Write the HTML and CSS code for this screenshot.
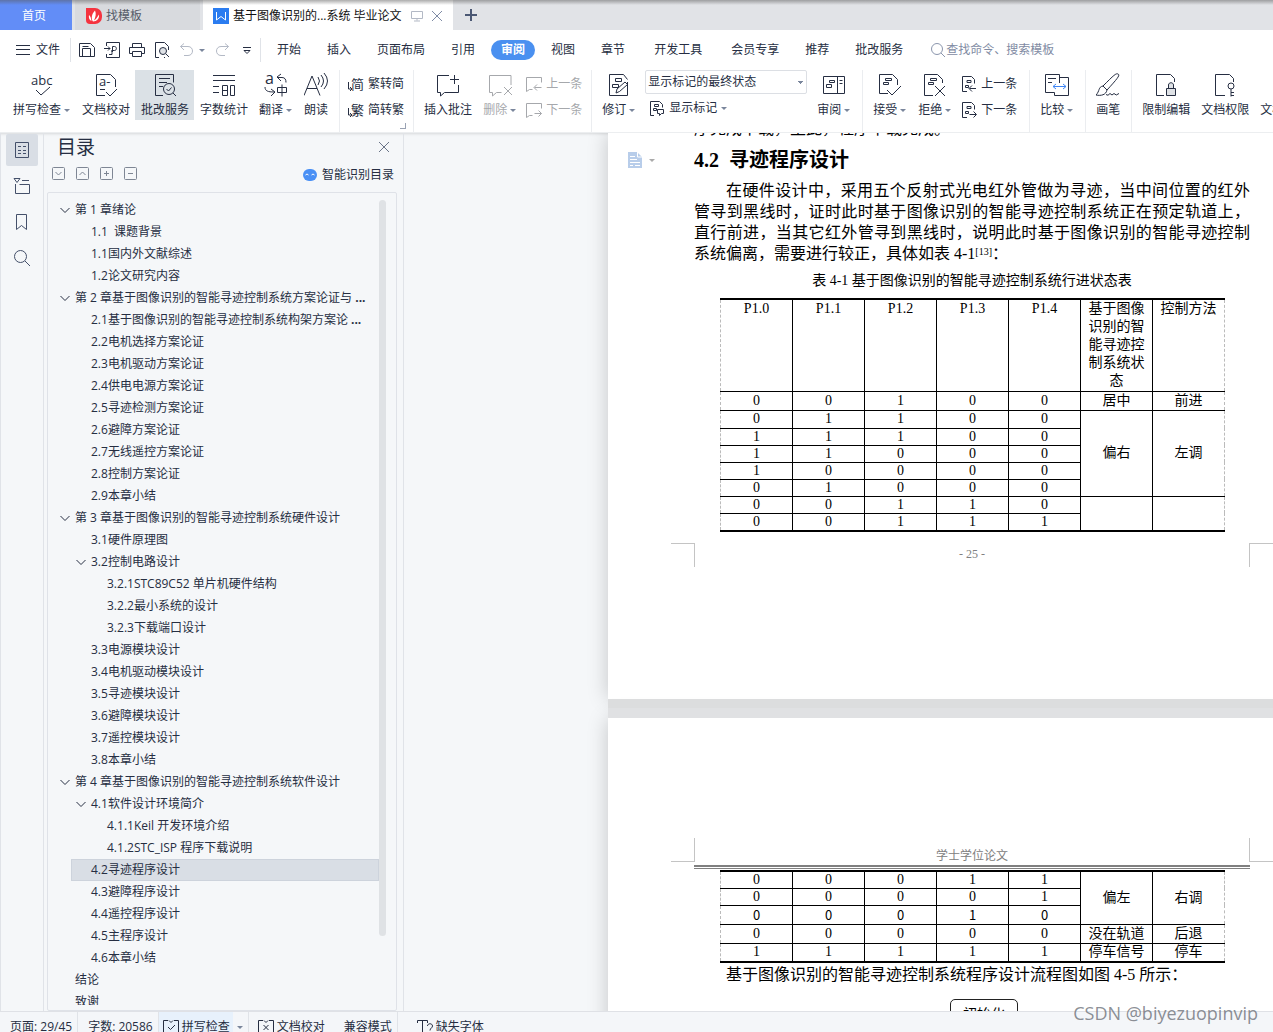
FILE: index.html
```html
<!DOCTYPE html>
<html lang="zh-CN">
<head>
<meta charset="utf-8">
<title>基于图像识别的...系统 毕业论文</title>
<link rel="stylesheet" href="styles.css">
</head>
<body>
<svg class="defs" aria-hidden="true">
  <symbol id="note-prev" viewBox="0 0 16 16"><path d="M.5 15.500v-14h15v5M.5 15.500l3-2h3M15.500 11.500H8.500M11 8.500l-3 3 3 3"/></symbol>
  <symbol id="note-next" viewBox="0 0 16 16"><path d="M.5 15.500v-14h15v5M.5 15.500l3-2h3M8.500 11.500h7M12.500 8.500l3 3-3 3"/></symbol>
  <symbol id="rev-prev" viewBox="0 0 16 16"><path d="M6 15.500H1.500V.5h9l3 3v4M6 4.500h4v2H6zM4.500 9.500h3v2h-3zM15 12.500H8.500M11 9.500l-3 3 3 3"/></symbol>
  <symbol id="rev-next" viewBox="0 0 16 16"><path d="M6 15.500H1.500V.5h9l3 3v4M6 4.500h4v2H6zM4.500 9.500h3v2h-3zM8.500 12.500H15M12.500 9.500l3 3-3 3"/></symbol>
  <symbol id="chev" viewBox="0 0 10 10"><path d="M.5 3L5 7.500 9.500 3"/></symbol>
</svg>

<header class="tabs">
  <a class="tab home" href="#">首页</a>
  <a class="tab template" href="#"><svg width="16" height="16" viewBox="0 0 16 16"><path class="red" d="M0 0h9a7 7 0 0 1 7 7v2a7 7 0 0 1-7 7H4a4 4 0 0 1-4-4z"/><path class="white" d="M7 13.500C5 11 5.500 6 9 2.500c1.500 3 .5 7-1 10 2-1 3-3 5-6 .5 4-2 7-6 7zM5.500 13C3 12 2.500 9.500 3 7c1.500 1 2 3 2.500 6z"/></svg>找模板</a>
  <div class="tab current"><svg width="16" height="16" viewBox="0 0 16 16"><path class="blue" d="M0 0h16v16H0z"/><path class="wline" d="M3.500 4v8L8 8.500l4.500 3.500V4"/></svg><span>基于图像识别的...系统 毕业论文</span>
    <svg class="pale" width="12" height="12" viewBox="0 0 12 12"><path d="M.5 1.500h11v7H.5zM6 8.500v2M3 11h6"/></svg>
    <button class="plain" aria-label="关闭标签"><svg class="mid" width="12" height="12" viewBox="0 0 12 12"><path d="M1 1l10 10M11 1L1 11"/></svg></button></div>
  <button class="plain add" aria-label="新建"><svg width="12" height="12" viewBox="0 0 12 12"><path d="M6 0v12M0 6h12"/></svg></button>
</header>

<nav class="menu">
  <button class="plain file"><svg width="14" height="12" viewBox="0 0 14 12"><path d="M0 1.500h14M0 5.500h14M0 10.500h14"/></svg>文件</button>
  <div class="quick">
    <button class="plain" aria-label="保存"><svg viewBox="0 0 16 16"><path d="M.5 1.500h11l4 4v9H.5zM3.500 14.500v-8h8v8M3.500 4.500h6"/></svg></button>
    <button class="plain" aria-label="输出PDF"><svg viewBox="0 0 16 16"><path d="M2.500 4V.5h13v15h-13V12M0 6.500h6M4 4.500l2 2-2 2M5 12.500h3v-2c-1-2 0-3 1-2M8.500 10V4.500h2c2.500 0 2.500 4 0 4H8.500"/></svg></button>
    <button class="plain" aria-label="打印"><svg viewBox="0 0 16 16"><path d="M3.500 5.500v-4h9v4M3.500 11.500h-3v-6h15v6h-3M3.500 9.500h9v5h-9z"/></svg></button>
    <button class="plain" aria-label="打印预览"><svg viewBox="0 0 16 16"><path d="M5 15.500H1.500V.5h9l4 4V8M10 15.500h1"/><circle class="fill" cx="9" cy="9" r="3.500"/><path d="M12 12l3 3"/></svg></button>
    <button class="plain undo" aria-label="撤销"><svg class="pale" viewBox="0 0 16 16"><path d="M5 1.500l-3.500 3L5 8M1.500 4.500H9c6 0 6 9 0 9H5"/></svg><i class="caret"></i></button>
    <button class="plain" aria-label="恢复"><svg class="pale" viewBox="0 0 16 16"><path d="M11 1.500l3.500 3L11 8M14.500 4.500H7c-6 0-6 9 0 9h4"/></svg></button>
    <button class="plain" aria-label="更多"><svg viewBox="0 0 16 16"><path d="M4 5.500h8M5 8.500l3 3 3-3z"/></svg></button>
  </div>
  <div class="menus">
    <a href="#">开始</a><a href="#">插入</a><a href="#">页面布局</a><a href="#">引用</a><a class="on" href="#">审阅</a><a href="#">视图</a><a href="#">章节</a><a class="wide" href="#">开发工具</a><a href="#">会员专享</a><a href="#">推荐</a><a href="#">批改服务</a>
  </div>
  <label class="search"><svg width="16" height="16" viewBox="0 0 16 16"><circle cx="7" cy="7" r="5.500"/><path d="M11 11l4 4"/></svg><input type="text" aria-label="查找命令" placeholder="查找命令、搜索模板"></label>
</nav>

<section class="ribbon">
  <button class="big"><svg viewBox="0 0 24 24"><text x="1" y="12" class="glyph">abc</text><path d="M6 17l5 5 9-8"/></svg><span>拼写检查<i class="caret"></i></span></button>
  <button class="big"><svg viewBox="0 0 24 24"><path d="M11 22.500H2.500v-21h14l5 5V14M12 19l4 4 7-7M6 16.500h5"/><text x="5" y="13" class="glyph">a-</text></svg><span>文档校对</span></button>
  <button class="big active"><svg viewBox="0 0 24 24"><path d="M10 22.500H2.500v-21h18v8M6 5.500h11M6 9.500h8M6 13.500h4"/><circle cx="16" cy="16" r="5.500"/><path d="M20 20l3 3M13.500 16l2 2 3-3.500"/></svg><span>批改服务</span></button>
  <button class="big"><svg viewBox="0 0 24 24"><path d="M1 2.500h22M1 7.500h22M1 13.500h6M1 19.500h6M10.500 12.500h5v10h-5zM10.500 17.500h5M18.500 12.500h4v10h-4z"/></svg><span>字数统计</span></button>
  <button class="big"><svg viewBox="0 0 24 24"><text x="1" y="11" class="letter">a</text><path d="M17 1l-4 3 4 4M13 4.500h5c3 0 4 2 4 5M1 14c0 4 3 5 9 5M7 16l4 3-4 4M13.500 14.500h9v5h-9zM18 11.500v12"/></svg><span>翻译<i class="caret"></i></span></button>
  <button class="big"><svg viewBox="0 0 24 24"><path d="M0 22.500L8 3l8 19.500M3 15.500h10M14 4q3 4 0 8M17 2q5 6 0 12M20 0q7 8 0 16"/></svg><span>朗读</span></button>
  <hr>
  <div class="pair corner">
    <button><svg viewBox="0 0 16 16"><text x="3" y="13" class="glyph">简</text><path d="M.5 6v7h3M2 11l2 2-2 2"/></svg>繁转简</button>
    <button><svg viewBox="0 0 16 16"><text x="3" y="13" class="glyph">繁</text><path d="M.5 6v7h3M2 11l2 2-2 2"/></svg>简转繁</button>
  </div>
  <hr>
  <button class="big"><svg viewBox="0 0 24 24"><path d="M13 2.500H1.500v17h3V23l4-3.500h14V12M14 6.500h9M18.500 2v9"/></svg><span>插入批注</span></button>
  <button class="big off"><svg viewBox="0 0 24 24"><path d="M23 12V2.500H1.500v17h3V23l4-3.500h5M16 14l8 8M24 14l-8 8"/></svg><span>删除<i class="caret"></i></span></button>
  <div class="pair off">
    <button><svg><use href="#note-prev"/></svg>上一条</button>
    <button><svg><use href="#note-next"/></svg>下一条</button>
  </div>
  <hr>
  <button class="big"><svg viewBox="0 0 24 24"><path d="M20.500 9v13.500h-18v-21h14l4 5M8.500 5.500h6v3h-6zM5.500 11.500h6v3h-6zM9 20l1-4 8-7 2.500 2.500-8 7z"/></svg><span>修订<i class="caret"></i></span></button>
  <div class="pair state">
    <select aria-label="显示状态"><option>显示标记的最终状态</option></select>
    <button><svg viewBox="0 0 16 16"><path d="M5 15.500H1.500v-14h9l3 3v3M5.500 4.500h4v2h-4zM4.500 8.500h3v2h-3zM8.500 9.500h6v4h-2l-2 2v-2h-2z"/></svg>显示标记<i class="caret"></i></button>
  </div>
  <button class="big"><svg viewBox="0 0 24 24"><path d="M1.500 3.500h21v17h-21zM15.500 3.500v17M17.500 7.500h3M17.500 10.500h3M7.500 7.500h5v2h-5zM4.500 11.500h5v3h-5z"/></svg><span>审阅<i class="caret"></i></span></button>
  <hr>
  <button class="big"><svg viewBox="0 0 24 24"><path d="M10 20.500H1.500v-19h13l5 5V12M7.500 5.500h6v2h-6zM5.500 9.500h5v2h-5zM9 17l5 5 9-9"/></svg><span>接受<i class="caret"></i></span></button>
  <button class="big"><svg viewBox="0 0 24 24"><path d="M10 22.500H1.500v-21h13l5 5V10M7.500 5.500h6v2h-6zM5.500 9.500h5v2h-5zM12 13l10 10M22 13L12 23"/></svg><span>拒绝<i class="caret"></i></span></button>
  <div class="pair review">
    <button><svg><use href="#rev-prev"/></svg>上一条</button>
    <button><svg><use href="#rev-next"/></svg>下一条</button>
  </div>
  <hr>
  <button class="big"><svg viewBox="0 0 24 24"><path d="M14.500 10V1.500H.5v18h9M9.500 19.500v3h14v-18h-9M3 5.500h8M3 9.500h4"/><path class="bluel" d="M8 13.500h13M11 11l-3 2.500 3 2.500M18 11l3 2.500-3 2.500"/></svg><span>比较<i class="caret"></i></span></button>
  <hr>
  <button class="big"><svg viewBox="0 0 24 24"><path d="M22 1c2 1 1 3-11 16l-4-4C18 2 20 0 22 1zM7 13c-5 1-3 5-7 9 5 1 10 0 11-5M10 21.500q2 2 4-1 2 3 4 0 2 3 5 0"/></svg><span>画笔</span></button>
  <hr>
  <button class="big"><svg viewBox="0 0 24 24"><path d="M10 22.500H2.500v-21h14l4 4V9"/><path class="fill" d="M12.500 15.500h9v7h-9zM14.500 15v-3c0-3 5-3 5 0v3"/></svg><span>限制编辑</span></button>
  <button class="big"><svg viewBox="0 0 24 24"><path d="M12 22.500H2.500v-21h14l4 4V9M18 16v7.500M18 19.500h3M18 22.500h3"/><circle cx="18" cy="13" r="3"/></svg><span>文档权限</span></button>
  <button class="big"><svg viewBox="0 0 24 24"></svg><span>文档认证</span></button>
</section>

<main>
  <nav class="rail">
    <button class="active" aria-label="目录"><svg viewBox="0 0 20 20"><path d="M3.500 2.500h13v15h-13zM6 6.500h3M11 6.500h3M6 10.500h3M11 10.500h3M6 13.500h3M11 13.500h3"/></svg></button>
    <button aria-label="章节"><svg viewBox="0 0 20 20"><path d="M2 2.500h6l-3 4zM10 4.500h7M3.500 8v9.500h14v-9h-10"/></svg></button>
    <button aria-label="书签"><svg viewBox="0 0 20 20"><path d="M4.500 2.500h10v15l-5-4-5 4z"/></svg></button>
    <button aria-label="查找"><svg viewBox="0 0 20 20"><circle cx="8.500" cy="8.500" r="6"/><path d="M13 13l5 5"/></svg></button>
  </nav>
  <aside class="outline">
    <div class="head"><h2>目录</h2><button class="plain" aria-label="关闭"><svg width="10" height="10" viewBox="0 0 10 10"><path d="M0 0l10 10M10 0L0 10"/></svg></button></div>
    <div class="tools">
      <button class="plain" aria-label="展开"><svg viewBox="0 0 13 13"><rect x=".5" y=".5" width="12" height="12" rx="1"/><path d="M3.500 5l3 3 3-3"/></svg></button>
      <button class="plain" aria-label="收起"><svg viewBox="0 0 13 13"><rect x=".5" y=".5" width="12" height="12" rx="1"/><path d="M3.500 8l3-3 3 3"/></svg></button>
      <button class="plain" aria-label="升级"><svg viewBox="0 0 13 13"><rect x=".5" y=".5" width="12" height="12" rx="1"/><path d="M4 6.500h5M6.500 4v5"/></svg></button>
      <button class="plain" aria-label="降级"><svg viewBox="0 0 13 13"><rect x=".5" y=".5" width="12" height="12" rx="1"/><path d="M4 6.500h5"/></svg></button>
      <a class="smart" href="#"><svg width="14" height="12" viewBox="0 0 14 12"><rect class="dot" width="14" height="12" rx="6"/><path class="wline" d="M2.500 6q1.500-2 3 0M8.500 6q1.500-2 3 0"/></svg>智能识别目录</a>
    </div>
    <div class="tree">
      <ul>
        <li><a href="#"><svg><use href="#chev"/></svg>第 1 章绪论</a></li>
        <li class="l2"><a href="#">1.1&nbsp; 课题背景</a></li>
        <li class="l2"><a href="#">1.1国内外文献综述</a></li>
        <li class="l2"><a href="#">1.2论文研究内容</a></li>
        <li><a href="#"><svg><use href="#chev"/></svg>第 2 章基于图像识别的智能寻迹控制系统方案论证与 <b>...</b></a></li>
        <li class="l2"><a href="#">2.1基于图像识别的智能寻迹控制系统构架方案论 <b>...</b></a></li>
        <li class="l2"><a href="#">2.2电机选择方案论证</a></li>
        <li class="l2"><a href="#">2.3电机驱动方案论证</a></li>
        <li class="l2"><a href="#">2.4供电电源方案论证</a></li>
        <li class="l2"><a href="#">2.5寻迹检测方案论证</a></li>
        <li class="l2"><a href="#">2.6避障方案论证</a></li>
        <li class="l2"><a href="#">2.7无线遥控方案论证</a></li>
        <li class="l2"><a href="#">2.8控制方案论证</a></li>
        <li class="l2"><a href="#">2.9本章小结</a></li>
        <li><a href="#"><svg><use href="#chev"/></svg>第 3 章基于图像识别的智能寻迹控制系统硬件设计</a></li>
        <li class="l2"><a href="#">3.1硬件原理图</a></li>
        <li class="l2"><a href="#"><svg><use href="#chev"/></svg>3.2控制电路设计</a></li>
        <li class="l3"><a href="#">3.2.1STC89C52 单片机硬件结构</a></li>
        <li class="l3"><a href="#">3.2.2最小系统的设计</a></li>
        <li class="l3"><a href="#">3.2.3下载端口设计</a></li>
        <li class="l2"><a href="#">3.3电源模块设计</a></li>
        <li class="l2"><a href="#">3.4电机驱动模块设计</a></li>
        <li class="l2"><a href="#">3.5寻迹模块设计</a></li>
        <li class="l2"><a href="#">3.6避障模块设计</a></li>
        <li class="l2"><a href="#">3.7遥控模块设计</a></li>
        <li class="l2"><a href="#">3.8本章小结</a></li>
        <li><a href="#"><svg><use href="#chev"/></svg>第 4 章基于图像识别的智能寻迹控制系统软件设计</a></li>
        <li class="l2"><a href="#"><svg><use href="#chev"/></svg>4.1软件设计环境简介</a></li>
        <li class="l3"><a href="#">4.1.1Keil 开发环境介绍</a></li>
        <li class="l3"><a href="#">4.1.2STC_ISP 程序下载说明</a></li>
        <li class="l2 sel"><a href="#">4.2寻迹程序设计</a></li>
        <li class="l2"><a href="#">4.3避障程序设计</a></li>
        <li class="l2"><a href="#">4.4遥控程序设计</a></li>
        <li class="l2"><a href="#">4.5主程序设计</a></li>
        <li class="l2"><a href="#">4.6本章小结</a></li>
        <li><a href="#">结论</a></li>
        <li><a href="#">致谢</a></li>
      </ul>
      <div class="scroll"></div>
    </div>
  </aside>

  <div class="canvas">
    <article class="page">
      <div class="cut"><p>序完成下载，至此，程序下载完成。</p></div>
      <div class="title">
        <button class="plain mark" aria-label="段落布局"><svg width="14" height="16" viewBox="0 0 14 16"><path class="pblue" d="M0 0h9l5 5v11H0z"/><path class="wline" d="M2 4.500h5M2 7.500h7M2 10.500h10M2 13.500h3M7 13.500h5M9.500 0v5h5"/></svg><i class="caret"></i></button>
        <h1>4.2  寻迹程序设计</h1>
      </div>
      <p class="body">在硬件设计中，采用五个反射式光电红外管做为寻迹，当中间位置的红外管寻到黑线时，证时此时基于图像识别的智能寻迹控制系统正在预定轨道上，直行前进，当其它红外管寻到黑线时，说明此时基于图像识别的智能寻迹控制系统偏离，需要进行较正，具体如表 4-1<sup>[13]</sup>：</p>
      <p class="caption" id="cap">表 4-1 基于图像识别的智能寻迹控制系统行进状态表</p>
      <table aria-labelledby="cap">
        <thead><tr><th>P1.0</th><th>P1.1</th><th>P1.2</th><th>P1.3</th><th>P1.4</th><th>基于图像识别的智能寻迹控制系统状态</th><th>控制方法</th></tr></thead>
        <tbody>
          <tr class="tall"><td>0</td><td>0</td><td>1</td><td>0</td><td>0</td><td>居中</td><td>前进</td></tr>
          <tr class="mid-row"><td>0</td><td>1</td><td>1</td><td>0</td><td>0</td><td rowspan="5">偏右</td><td rowspan="5">左调</td></tr>
          <tr><td>1</td><td>1</td><td>1</td><td>0</td><td>0</td></tr>
          <tr><td>1</td><td>1</td><td>0</td><td>0</td><td>0</td></tr>
          <tr><td>1</td><td>0</td><td>0</td><td>0</td><td>0</td></tr>
          <tr><td>0</td><td>1</td><td>0</td><td>0</td><td>0</td></tr>
          <tr><td>0</td><td>0</td><td>1</td><td>1</td><td>0</td><td rowspan="2"></td><td rowspan="2"></td></tr>
          <tr><td>0</td><td>0</td><td>1</td><td>1</td><td>1</td></tr>
        </tbody>
      </table>
      <footer class="margin foot"><i></i><span>- 25 -</span><i></i></footer>
    </article>
    <div class="gap"></div>
    <article class="page second">
      <header class="margin top"><i></i><span>学士学位论文</span><i></i></header>
      <div class="rule"></div>
      <table>
        <tbody>
          <tr><td>0</td><td>0</td><td>0</td><td>1</td><td>1</td><td rowspan="3">偏左</td><td rowspan="3">右调</td></tr>
          <tr><td>0</td><td>0</td><td>0</td><td>0</td><td>1</td></tr>
          <tr class="tall song"><td>0</td><td>0</td><td>0</td><td>1</td><td>0</td></tr>
          <tr class="tall"><td>0</td><td>0</td><td>0</td><td>0</td><td>0</td><td>没在轨道</td><td>后退</td></tr>
          <tr class="tall"><td>1</td><td>1</td><td>1</td><td>1</td><td>1</td><td>停车信号</td><td>停车</td></tr>
        </tbody>
      </table>
      <p class="body after">基于图像识别的智能寻迹控制系统程序设计流程图如图 4-5 所示：</p>
      <div class="node">初始化</div>
    </article>
  </div>
</main>

<footer class="status">
  <span class="cell first">页面: 29/45</span>
  <span class="cell">字数: 20586</span>
  <button class="cell spell"><svg viewBox="0 0 16 16"><path d="M5 1.500H.5v13h15v-13H11M6 1.500l2 2 2-2M5 8l2.500 2.500L12 6"/></svg>拼写检查</button><i class="caret"></i>
  <button class="cell proof"><svg viewBox="0 0 16 16"><path d="M5 1.500H.5v13h15v-13H11M6 1.500l2 2 2-2M5.500 6l5 5M10.500 6l-5 5"/></svg>文档校对</button>
  <span class="cell compat">兼容模式</span>
  <button class="cell fonts"><svg viewBox="0 0 16 16"><path d="M.5 4V1.500h10V4M5.500 1.500v12M3 13.500h5M10.500 7c0-3 5-3 5 0 0 2-2.500 2-2.500 4.500M13 13v1.500"/></svg>缺失字体</button>
</footer>
<div class="watermark">CSDN @biyezuopinvip</div>
</body>
</html>
```
FILE: styles.css
```css
* { box-sizing: border-box; }
:root {
  --ink: #262e42;
  --line: #e0e3e8;
  --panel: #f5f7f9;
}
body {
  margin: 0;
  height: 100vh;
  overflow: hidden;
  display: flex;
  flex-direction: column;
  position: relative;
  background: #fff;
  color: var(--ink);
  font: 12px/16px "Open Sans", "Noto Sans CJK SC", sans-serif;
  text-spacing-trim: space-all;
}
a { color: inherit; text-decoration: none; }
button, input, select { font: inherit; color: inherit; }
button { border: 0; background: none; padding: 0; margin: 0; white-space: nowrap; }
svg { fill: none; stroke: currentColor; stroke-width: 1; flex: none; }
.defs { position: absolute; width: 0; height: 0; }
.plain { display: flex; align-items: center; }
.caret {
  display: inline-block;
  border: 3px solid transparent;
  border-top-color: #7a869c;
  border-bottom: 0;
  width: 0;
  height: 0;
  flex: none;
}
.pale { color: #b3b9c5; }
.mid { color: #7f8ba5; }
.red { fill: #f5333f; stroke: none; }
.white { fill: #fff; stroke: none; }
.blue { fill: #2b7cf0; stroke: none; }
.pblue { fill: #b8cdea; stroke: none; }
.dot { fill: #4a90f5; stroke: none; }
.wline { stroke: #fff; }
.bluel { stroke: #3f86f5; }
.fill { fill: #dfe2e6; }

/* document tabs */
.tabs { display: flex; flex: none; height: 30px; background: #e1e3e7; position: relative; }
.tabs::before {
  content: "";
  position: absolute;
  inset: 0 0 auto;
  height: 5px;
  background: linear-gradient(rgba(90, 90, 90, .5), rgba(120, 120, 120, 0));
}
.tab { display: flex; align-items: center; padding-top: 2px; }
.home { width: 72px; justify-content: center; background: #628df7; color: #fff; padding-right: 4px; }
.template { width: 125px; margin-left: 3px; padding-left: 11px; gap: 4px; background: #d8dade; color: #555b68; }
.current { width: 250px; margin-left: 3px; padding: 2px 10px 0; gap: 4px; background: #fff; color: #111; }
.current span { flex: 1; white-space: nowrap; }
.current .plain { margin-left: 4px; }
.add { padding: 0 12px; color: #4b5874; }
.add svg { stroke-width: 2; }

/* menu bar */
.menu { display: flex; align-items: center; flex: none; height: 38px; padding: 2px 0 0 16px; }
.file { gap: 6px; padding-right: 10px; height: 24px; border-right: 1px solid var(--line); }
.quick { display: flex; gap: 9px; height: 24px; padding: 0 5px 0 8px; border-right: 1px solid var(--line); }
.quick svg { width: 16px; height: 16px; }
.undo { gap: 4px; }
.menus { display: flex; align-items: center; gap: 26px; padding-left: 16px; white-space: nowrap; }
.menus .on { background: #4a90f0; color: #fff; font-weight: 700; border-radius: 10px; padding: 2px 10px; margin: 0 -10px; }
.menus .wide { padding: 0 3px; }
.search { display: flex; align-items: center; margin-left: 27px; color: #8b96ad; }
.search input { width: 140px; border: 0; padding: 0; background: none; }
.search input::placeholder { color: #7f8ba3; opacity: 1; }

/* ribbon */
.ribbon {
  display: flex;
  align-items: flex-start;
  flex: none;
  height: 64px;
  padding: 2px 0 0 7px;
  overflow: hidden;
}
.ribbon hr { flex: none; width: 1px; height: 62px; border: 0; margin: 0 4px 0 6px; background: #ebedf0; }
.big { display: flex; flex: none; flex-direction: column; align-items: center; height: 50px; padding: 3px 5px 0 6px; gap: 5px; }
.big svg { width: 24px; height: 24px; }
.big span { display: flex; align-items: center; }
.big .caret { margin: 0 1px 0 3px; }
.active { background: #dbe1e6; }
.off, .off .caret { color: #a6a8ac; }
.glyph { font-size: 13px; fill: currentColor; stroke: none; }
.letter { font-size: 16px; fill: currentColor; stroke: none; }
.pair { display: flex; flex: none; flex-direction: column; padding: 1px 3px 0 4px; position: relative; }
.pair button { display: flex; align-items: center; gap: 4px; height: 26px; }
.pair svg { width: 16px; height: 16px; overflow: visible; }
.review { padding-right: 6px; }
.corner::after {
  content: "";
  position: absolute;
  right: 1px;
  top: 53px;
  width: 5px;
  height: 5px;
  border: solid #9aa2b3;
  border-width: 0 1px 1px 0;
}
.state { padding: 0 4px; gap: 1px; }
.state select {
  appearance: none;
  width: 162px;
  height: 24px;
  border: 1px solid #dcdfe4;
  border-radius: 2px;
  padding: 0 2px;
  background: linear-gradient(#7a869c, #7a869c) 152px 10px / 5px 1px no-repeat,
    linear-gradient(#7a869c, #7a869c) 153px 11px / 3px 1px no-repeat,
    linear-gradient(#7a869c, #7a869c) 154px 12px / 1px 1px no-repeat, #fff;
}
.state button { padding-left: 4px; }

/* workspace */
main { display: flex; flex: 1; min-height: 0; overflow: hidden; background: var(--panel); border-top: 1px solid #eceef0; box-shadow: inset 0 3px 3px -2px rgba(0, 0, 0, .12); }
.rail { display: flex; flex: none; flex-direction: column; gap: 4px; width: 44px; padding: 1px 5px; border: solid var(--line); border-width: 0 1px; color: #44506a; }
.rail button { display: flex; align-items: center; justify-content: center; height: 32px; border-radius: 2px; }
.rail .active { background: #d9dee5; }
.rail svg { width: 20px; height: 20px; }
.outline { display: flex; flex: none; flex-direction: column; width: 360px; padding: 0 6px 0 3px; border-right: 1px solid var(--line); }
.head { display: flex; align-items: center; justify-content: space-between; height: 28px; padding: 0 8px 0 10px; flex: none; color: #6b7588; }
.head h2 { margin: 0; font-size: 19px; line-height: 28px; font-weight: 400; color: var(--ink); }
.tools { display: flex; align-items: center; gap: 11px; flex: none; height: 25px; padding: 0 3px 0 5px; color: #7e8694; }
.tools > .plain svg { width: 13px; height: 13px; }
.smart { display: flex; align-items: center; gap: 5px; margin-left: auto; padding-top: 2px; color: var(--ink); }
.tree { display: flex; flex: 1; min-height: 0; margin-top: 6px; padding: 6px 10px 5px 11px; border: 1px solid #dfe2e8; border-radius: 2px; }
.tree ul { flex: 1; margin: 0; padding: 0 0 0 12px; list-style: none; overflow: hidden; }
.tree li a { display: flex; align-items: center; height: 22px; padding-left: 4px; white-space: pre; }
.tree .l2 a { padding-left: 20px; }
.tree .l3 a { padding-left: 36px; }
.tree li svg { width: 10px; height: 10px; margin: 0 5px 0 -15px; }
.tree .sel { background: #d9dee5; box-shadow: inset 0 0 0 1px #cdd3dc; }
.scroll { width: 7px; flex: none; margin: 1px 0 69px; border-radius: 4px; background: #dfe2e5; }

/* document pages */
.canvas { flex: 1; min-width: 0; overflow: hidden; padding-left: 204px; }
.page {
  width: 728px;
  padding: 0 86px 132px;
  background: #fff;
  color: #000;
  font-family: "Liberation Serif", "Noto Sans CJK SC", serif;
  box-shadow: 0 0 20px rgba(0, 0, 0, .2);
}
.gap { position: relative; width: 728px; height: 19px; background: linear-gradient(#dcddde 50%, #e0e1e3 50%); }
.cut { display: flex; align-items: flex-end; height: 6px; overflow: hidden; }
.cut p { margin: 0; font-size: 16px; line-height: 21px; }
.title { display: flex; align-items: center; margin: 7px 0 6px -66px; }
.mark { width: 66px; gap: 7px; color: #aaa; }
.mark .caret { border-top-color: #aaa; }
.title h1 { margin: 0; font-size: 20px; line-height: 28px; white-space: pre; }
.body { margin: 0; font-size: 16px; line-height: 21px; text-indent: 32px; text-align: justify; }
.body sup { font-size: 10px; line-height: 1px; vertical-align: 4px; }
.caption { margin: 7px 0; font-size: 14px; line-height: 20px; text-align: center; }
table { width: 505px; margin: 0 0 0 26px; table-layout: fixed; border-collapse: collapse; border: 1px dashed #bbb; border-top: 2px solid #000; border-bottom: 2px solid #000; font-size: 14px; line-height: 16px; }
th, td { padding: 0; height: 17px; font-weight: 400; text-align: center; border: 1px solid #000; }
th { height: 92px; line-height: 18px; vertical-align: top; padding: 0 7px; }
th:first-child { border-left: 1px dashed #bbb; }
td:first-child { border-left: 1px dashed #bbb; }
.tall td { height: 19px; }
.mid-row td { height: 18px; }
th:nth-child(7), td:nth-child(7) { border-right: 1px dashed #bbb; }
.song { font-family: "Noto Sans CJK SC", sans-serif; }
.song td { font-size: 13px; }
.margin { display: grid; grid-template-columns: 24px 1fr 24px; height: 24px; margin: 0 -23px; color: #808080; font-size: 12px; text-align: center; }
.margin i { border: 0 solid #c4c4c4; }
.foot { margin-top: 11px; }
.foot span { line-height: 22px; }
.foot i { border-width: 1px 1px 0 0; }
.foot i:last-child { border-width: 1px 0 0 1px; }
.top span { align-self: end; line-height: 12px; }
.top i { border-width: 0 1px 1px 0; }
.top i:last-child { border-width: 0 0 1px 1px; }
.second { padding-top: 120px; }
.rule { height: 4px; margin-top: 3px; border-top: 2px solid #808080; border-bottom: 1px solid #808080; }
.second table { margin-top: 1px; }
.after { margin-top: 1px; }
.node { width: 68px; height: 40px; margin: 14px 0 0 256px; padding-top: 7px; border: 1px solid #222; border-radius: 5px; font-size: 14px; text-align: center; }

/* status bar */
.status { display: flex; flex: none; height: 21px; overflow: hidden; padding-left: 10px; background: #f4f6f9; border-top: 1px solid #dfe1e6; white-space: nowrap; }
.cell { display: flex; align-items: center; height: 30px; padding: 0 5px 0 10px; border-right: 1px solid var(--line); }
.status svg { width: 16px; height: 16px; margin-right: 3px; }
.status .first { padding-left: 0; }
.status .spell { padding: 0 3px 0 4px; border: 0; background: #e7f1fc; }
.status > .caret { margin: 14px 5px 0 4px; }
.status .proof { padding: 0 9px 0 9px; border-left: 1px solid var(--line); border-right: 0; }
.status .compat { padding-left: 10px; }
.status .fonts { padding-left: 19px; border: 0; }
.watermark { position: absolute; right: 15px; bottom: 8px; color: rgba(110, 114, 122, .8); font-size: 18px; line-height: 22px; }
```
